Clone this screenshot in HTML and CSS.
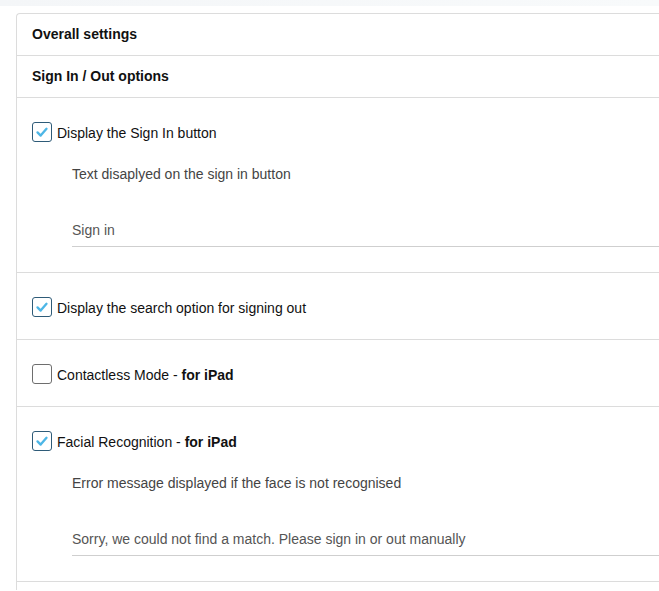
FILE: index.html
```html
<!DOCTYPE html>
<html>
<head>
<meta charset="utf-8">
<link rel="stylesheet" href="styles.css">
</head>
<body>
<div class="topband"></div>
<div class="page">
  <div class="card">
    <div class="head">Overall settings</div>
    <div class="head">Sign In / Out options</div>

    <div class="row">
      <label class="opt">
        <span class="cb checked"><svg viewBox="0 0 20 20" width="20" height="20"><path d="M5 10.5 L8.5 14 L15 6.5" fill="none" stroke="#4db6e6" stroke-width="2.6" stroke-linecap="round" stroke-linejoin="round"/></svg></span>
        <span class="txt">Display the Sign In button</span>
      </label>
      <div class="sub">
        <div class="sublabel">Text disaplyed on the sign in button</div>
        <div class="field">Sign in</div>
      </div>
    </div>

    <div class="row">
      <label class="opt">
        <span class="cb checked"><svg viewBox="0 0 20 20" width="20" height="20"><path d="M5 10.5 L8.5 14 L15 6.5" fill="none" stroke="#4db6e6" stroke-width="2.6" stroke-linecap="round" stroke-linejoin="round"/></svg></span>
        <span class="txt">Display the search option for signing out</span>
      </label>
    </div>

    <div class="row">
      <label class="opt">
        <span class="cb"></span>
        <span class="txt">Contactless Mode - <b>for iPad</b></span>
      </label>
    </div>

    <div class="row">
      <label class="opt">
        <span class="cb checked"><svg viewBox="0 0 20 20" width="20" height="20"><path d="M5 10.5 L8.5 14 L15 6.5" fill="none" stroke="#4db6e6" stroke-width="2.6" stroke-linecap="round" stroke-linejoin="round"/></svg></span>
        <span class="txt">Facial Recognition - <b>for iPad</b></span>
      </label>
      <div class="sub">
        <div class="sublabel">Error message displayed if the face is not recognised</div>
        <div class="field">Sorry, we could not find a match. Please sign in or out manually</div>
      </div>
    </div>

    <div class="row empty"></div>
  </div>
</div>
</body>
</html>
```

FILE: styles.css
```css
html, body {
  margin: 0;
  padding: 0;
  background: #ffffff;
  font-family: "Liberation Sans", Arial, Helvetica, sans-serif;
  color: #111;
  overflow: hidden;
}
.topband {
  height: 6px;
  background: linear-gradient(to right, #f4f6f8, #f8fafb);
}
.page {
  padding: 7px 0 0 16px;
}
.card {
  border: 1px solid #dcdcdc;
  border-right: none;
  border-bottom: none;
  border-top-left-radius: 4px;
}
.head {
  height: 41px;
  line-height: 41px;
  padding-left: 15px;
  font-size: 14px;
  font-weight: bold;
  color: #111;
  border-bottom: 1px solid #dcdcdc;
}
.row {
  padding: 24px 0 22px 15px;
  border-bottom: 1px solid #dcdcdc;
}
.row.empty {
  height: 8px;
  padding: 0;
  border-bottom: none;
}
.opt {
  display: flex;
  align-items: center;
  gap: 5px;
  height: 20px;
  font-size: 14px;
  color: #111;
}
.opt .txt {
  padding-top: 2px;
}
.opt b {
  font-weight: bold;
}
.cb {
  box-sizing: border-box;
  width: 20px;
  height: 20px;
  border: 1px solid #6e6e6e;
  border-radius: 3px;
  background: #fff;
  display: inline-flex;
  align-items: center;
  justify-content: center;
  flex: none;
}
.cb.checked {
  border-color: #2e5b78;
}
.cb svg {
  display: block;
}
.sub {
  margin-left: 40px;
  padding-bottom: 3px;
}
.sublabel {
  margin-top: 22px;
  height: 20px;
  line-height: 20px;
  font-size: 14px;
  color: #444;
}
.field {
  margin-top: 29px;
  height: 32px;
  padding-top: 1px;
  line-height: 33px;
  font-size: 14px;
  color: #555;
  border-bottom: 1px solid #cfcfcf;
}
```
